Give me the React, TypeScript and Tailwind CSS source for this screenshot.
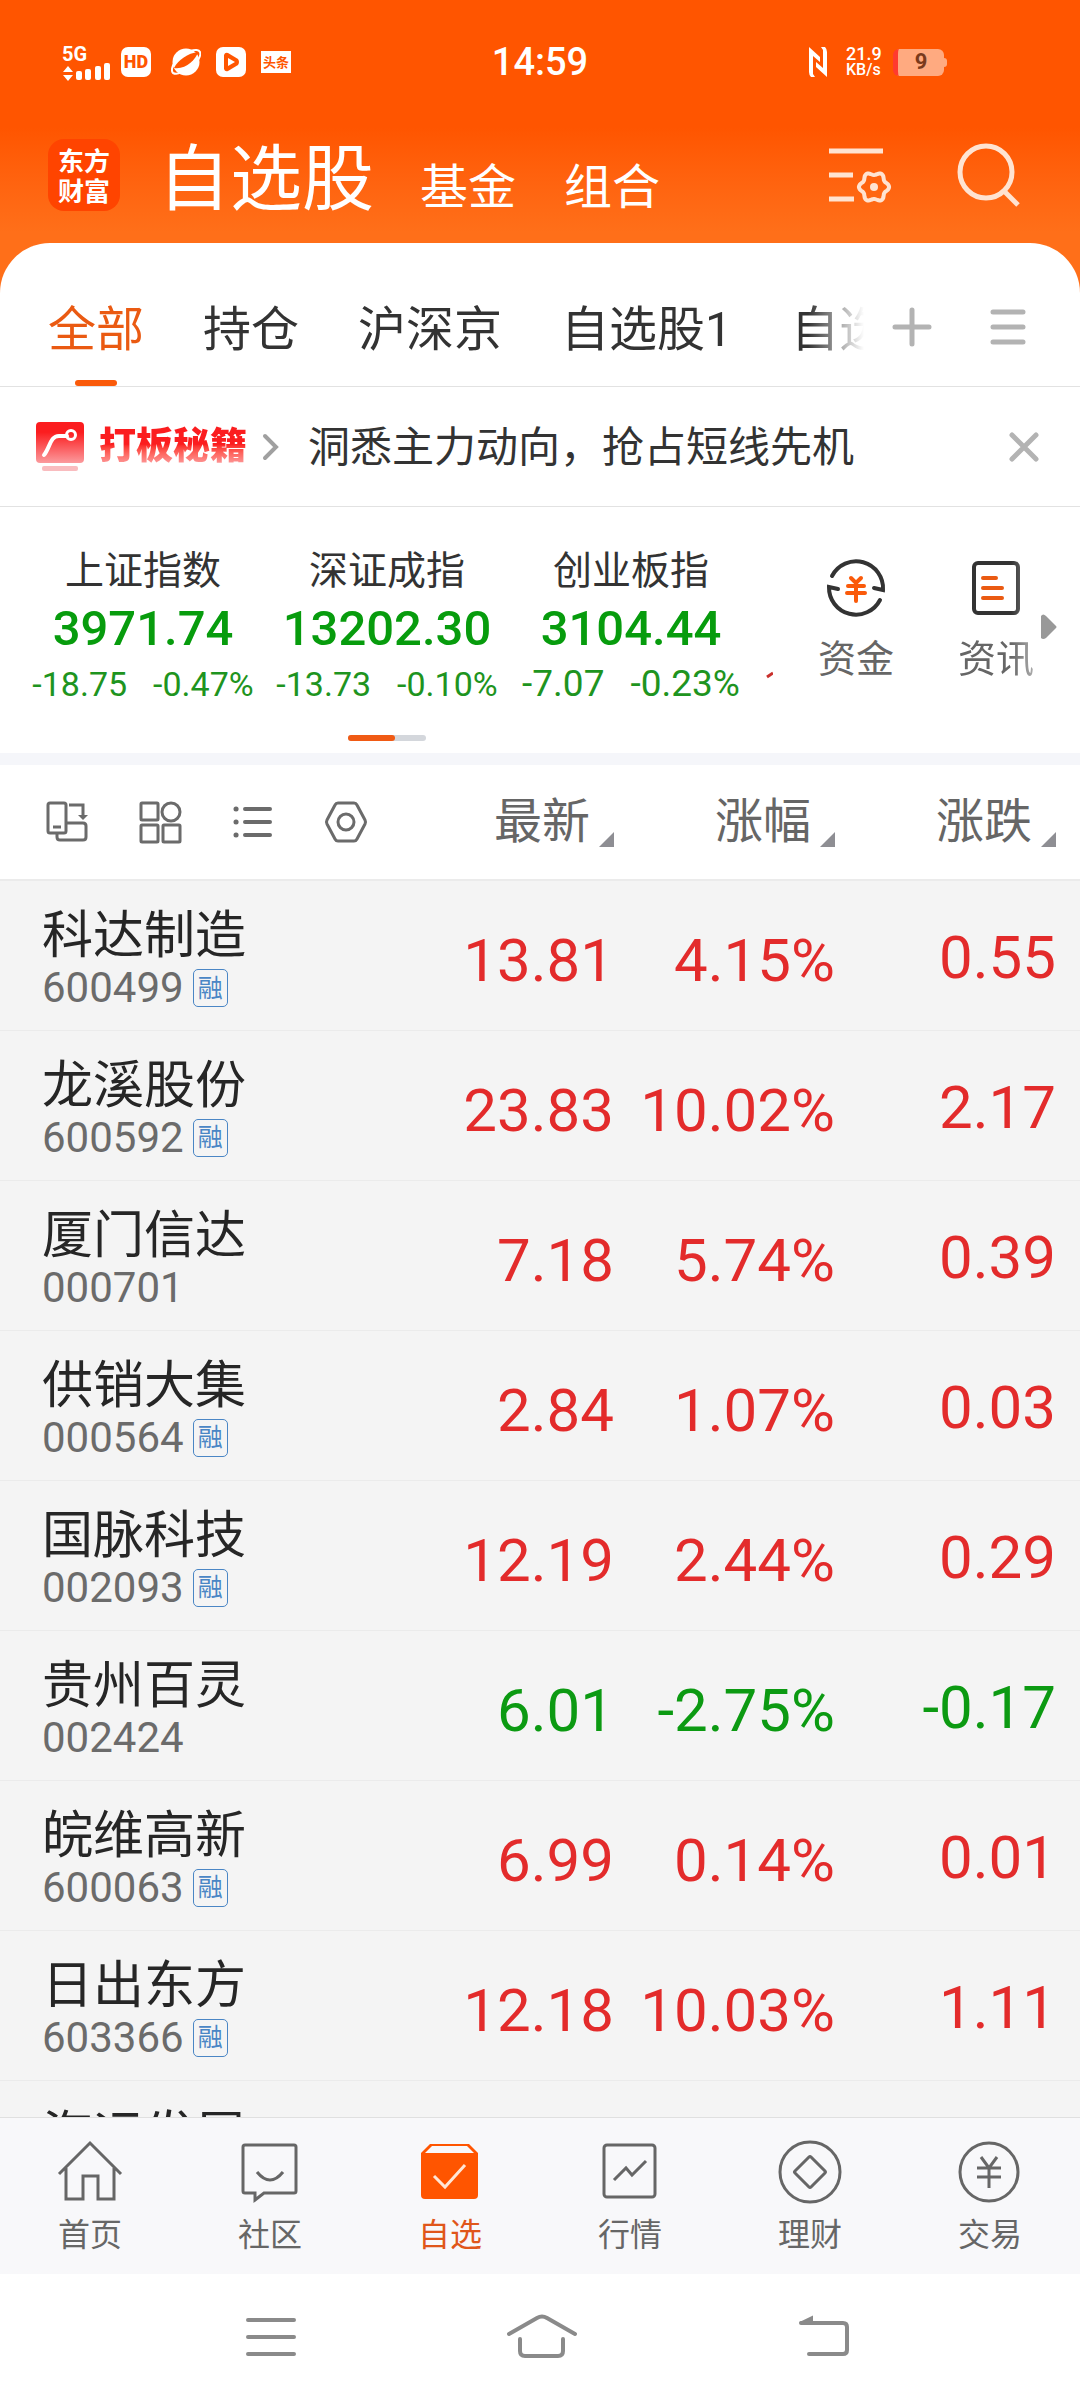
import type { ReactNode } from 'react';

type Stock = { name: string; code: string; margin: boolean; price: string; pct: string; diff: string; down?: boolean };

const stocks: Stock[] = [
  { name: '科达制造', code: '600499', margin: true, price: '13.81', pct: '4.15%', diff: '0.55' },
  { name: '龙溪股份', code: '600592', margin: true, price: '23.83', pct: '10.02%', diff: '2.17' },
  { name: '厦门信达', code: '000701', margin: false, price: '7.18', pct: '5.74%', diff: '0.39' },
  { name: '供销大集', code: '000564', margin: true, price: '2.84', pct: '1.07%', diff: '0.03' },
  { name: '国脉科技', code: '002093', margin: true, price: '12.19', pct: '2.44%', diff: '0.29' },
  { name: '贵州百灵', code: '002424', margin: false, price: '6.01', pct: '-2.75%', diff: '-0.17', down: true },
  { name: '皖维高新', code: '600063', margin: true, price: '6.99', pct: '0.14%', diff: '0.01' },
  { name: '日出东方', code: '603366', margin: true, price: '12.18', pct: '10.03%', diff: '1.11' },
  { name: '海运发展', code: '', margin: false, price: '', pct: '', diff: '' },
];

const indices = [
  { name: '上证指数', value: '3971.74', diff: '-18.75', pct: '-0.47%', size: 'text-[34px]' },
  { name: '深证成指', value: '13202.30', diff: '-13.73', pct: '-0.10%', size: 'text-[34px]' },
  { name: '创业板指', value: '3104.44', diff: '-7.07', pct: '-0.23%', size: 'text-[37px]' },
];

// Outline of a six-lobed gear centred on (45, 44).
const gearPath =
  Array.from({ length: 72 }, (_, i) => {
    const t = (i / 72) * Math.PI * 2;
    const r = 13.5 + 1.6 * Math.cos(6 * t);
    return `${i ? 'L' : 'M'}${(45 + r * Math.cos(t)).toFixed(1)} ${(44 + r * Math.sin(t)).toFixed(1)}`;
  }).join('') + 'Z';

function StatusBar() {
  return (
    <div className="grid grid-cols-[1fr_auto_1fr] items-center h-[124px] px-[62px] text-white">
      <div className="flex items-center">
        <div className="flex w-[50px] flex-col">
          <span className="pt-[2px] text-[20px] leading-[18px] font-bold">5G</span>
          <svg width="50" height="18" viewBox="0 16 50 18" fill="#fff" aria-hidden="true">
            <path d="M6 19l5 6H1zM6 34l5-6H1z" />
            <rect x="14" y="24" width="6" height="9" rx="2" />
            <rect x="23" y="22" width="6" height="11" rx="2" />
            <rect x="33" y="19" width="6" height="14" rx="2" />
            <rect x="42" y="16" width="6" height="17" rx="2" />
          </svg>
        </div>
        <span className="ml-[9px] grid place-items-center size-[30px] rounded-[7px] bg-white text-[#ff5500] text-[18px] leading-none font-black">HD</span>
        <svg className="ml-[20px]" width="30" height="28" viewBox="0 0 30 28" aria-hidden="true">
          <circle cx="15" cy="14" r="13.5" fill="#fff" />
          <path d="M3 20C7 12 17 5 27 4C25 12 14 22 3 20Z" fill="#ff5500" />
          <path d="M4 14C1 18 0 23 2 25C4 26 7 26 10 24M20 3C24 1 28 2 29 4C30 7 28 11 26 13" fill="none" stroke="#fff" strokeWidth="2" />
        </svg>
        <svg className="ml-[15px]" width="30" height="30" viewBox="0 0 30 30" aria-hidden="true">
          <rect width="30" height="30" rx="7" fill="#fff" />
          <path d="M8 8Q9 5 12 6L22 12Q24 15 22 18L12 24Q9 25 8 22Z" fill="#ff5500" />
          <path d="M12 11l7 4-7 4z" fill="#fff" />
        </svg>
        <span className="ml-[15px] grid place-items-center w-[30px] h-[22px] bg-white text-[#ff5500] text-[13px] leading-none font-bold">头条</span>
      </div>
      <time className="text-[38px] leading-none font-medium">14:59</time>
      <div className="flex items-center justify-end pr-[71px]">
        <svg width="18" height="30" viewBox="0 0 18 30" fill="#fff" aria-hidden="true">
          <path d="M0 0L11 10V15L4 9V27L6 30H2Q0 28 0 25ZM18 30L7 20V15L14 21V3L12 0H16Q18 2 18 5Z" />
        </svg>
        <div className="ml-[19px] w-[36px] text-[18px] leading-[16px] font-medium">
          <div>21.9</div>
          <div className="text-[16px]">KB/s</div>
        </div>
        <div className="ml-[11px] flex items-center">
          <div className="grid place-items-center w-[51px] h-[27px] rounded-[6px] border-l-[5px] border-[#ff3b2f] bg-[#ffaa80] text-[#7a3a1c] text-[22px] leading-none font-bold">9</div>
          <div className="w-[3px] h-[9px] rounded-r-[3px] bg-[#ffaa80]" />
        </div>
      </div>
    </div>
  );
}

function Header() {
  return (
    <header className="flex h-[119px] pl-[48px] pr-[59px] text-white">
      <div className="mt-[15px] size-[72px] rounded-[16px] bg-[#ff4400] grid place-content-center text-center font-['Noto_Sans_CJK_SC',sans-serif] font-bold text-[26px] leading-[30px]">
        东方
        <br />
        财富
      </div>
      <nav className="ml-[38px] mt-[4px] flex items-baseline h-[100px]">
        <a href="#stocks" className="text-[72px] leading-[104px]">自选股</a>
        <a href="#funds" className="ml-[46px] text-[48px]">基金</a>
        <a href="#portfolio" className="ml-[48px] text-[48px]">组合</a>
      </nav>
      <button aria-label="列表设置" className="ml-auto mt-[19px] h-[64px]">
        <svg width="63" height="64" viewBox="0 0 63 64" fill="none" stroke="#ffe3d1" strokeWidth="5">
          <path d="M0 8H54M0 32H24M0 56H25" />
          <path d={gearPath} strokeWidth="4" strokeLinejoin="round" />
          <circle cx="45" cy="44" r="4" fill="#ffe3d1" stroke="none" />
        </svg>
      </button>
      <button aria-label="搜索" className="ml-[65px] mt-[18px] h-[66px]">
        <svg width="64" height="66" viewBox="0 0 64 66" fill="none" stroke="#ffe3d1" strokeWidth="5">
          <circle cx="29" cy="30" r="26" />
          <path d="M47 49L61 63" />
        </svg>
      </button>
    </header>
  );
}

function Tabs() {
  return (
    <div className="flex h-[144px] border-b border-[#e2e2e2] bg-white rounded-t-[50px]">
      <nav className="ml-[48px] flex flex-1 gap-[59px] overflow-hidden whitespace-nowrap text-[48px] text-[#333] [mask-image:linear-gradient(to_right,#000_calc(100%-56px),transparent)]">
        <a href="#all" className="flex flex-col items-center text-[#ea5a12]">
          <span className="pt-[51px] leading-[72px]">全部</span>
          <span className="mt-auto h-[6px] w-[42px] rounded-full bg-[#fa5a0a]" />
        </a>
        <a href="#hold" className="pt-[51px] leading-[72px]">持仓</a>
        <a href="#cn" className="pt-[51px] leading-[72px]">沪深京</a>
        <a href="#g1" className="pt-[51px] leading-[72px]">自选股1</a>
        <a href="#g2" className="pt-[51px] leading-[72px]">自选股2</a>
      </nav>
      <div className="flex w-[216px] shrink-0 gap-[58px] pl-[28px] pt-[64px]">
        <button aria-label="添加分组" className="h-[40px]">
          <svg width="40" height="40" viewBox="0 0 40 40" stroke="#b3b3b3" strokeWidth="5" strokeLinecap="round"><path d="M3 20H37M20 3V37" /></svg>
        </button>
        <button aria-label="分组菜单" className="h-[40px]">
          <svg width="36" height="40" viewBox="0 0 36 40" stroke="#b3b3b3" strokeWidth="5" strokeLinecap="round"><path d="M3 5H33M3 20H33M3 35H33" /></svg>
        </button>
      </div>
    </div>
  );
}

function Promo() {
  return (
    <div className="flex items-center h-[120px] border-b border-[#e2e2e2] bg-white pl-[36px] pr-[39px]">
      <svg width="48" height="50" viewBox="0 0 48 50" fill="none" aria-hidden="true">
        <defs>
          <linearGradient id="promo" x1="0" y1="0" x2="0" y2="1"><stop offset=".25" stopColor="#fb1d1f" /><stop offset="1" stopColor="#fb9a9d" /></linearGradient>
        </defs>
        <rect width="48" height="41" rx="4" fill="url(#promo)" />
        <path d="M8 33C14 26 14 14 23 14H31" stroke="#fff" strokeWidth="4" strokeLinecap="round" />
        <circle cx="35" cy="13" r="4.500" stroke="#fff" strokeWidth="3" />
        <rect x="6" y="44" width="36" height="5" rx="2" fill="#f9bcbf" />
      </svg>
      <a href="#tips" className="ml-[15px] bg-linear-to-b from-[#fb1d1f] from-45% to-[#fba0a3] to-85% bg-clip-text text-transparent text-[37px] leading-[54px] font-black">打板秘籍</a>
      <svg className="ml-[15px]" width="18" height="30" viewBox="0 0 18 30" fill="none" stroke="#a0a0a0" strokeWidth="4" strokeLinecap="round" aria-hidden="true"><path d="M3 4L14 15L3 26" /></svg>
      <p className="ml-[28px] pt-[2px] text-[42px] leading-[60px] text-[#333] whitespace-nowrap">洞悉主力动向，抢占短线先机</p>
      <button aria-label="关闭" className="ml-auto">
        <svg width="34" height="34" viewBox="0 0 34 34" stroke="#b3b3b3" strokeWidth="5" strokeLinecap="round"><path d="M5 5L29 29M29 5L5 29" /></svg>
      </button>
    </div>
  );
}

function IndexPanel() {
  return (
    <section className="flex h-[246px] bg-white">
      <div className="w-[774px] shrink-0 pl-[21px] pt-[36px]">
        <div className="flex items-end">
          {indices.map((i) => (
            <div key={i.name} className="w-[244px] shrink-0 text-center">
              <div className="text-[39px] leading-[56px] text-[#333]">{i.name}</div>
              <div className="text-[49px] leading-[60px] font-medium text-[#079c0d]">{i.value}</div>
              <div className={`flex justify-center gap-[26px] leading-[50px] text-[#1e9420] ${i.size}`}>
                <span>{i.diff}</span>
                <span>{i.pct}</span>
              </div>
            </div>
          ))}
          <svg className="mb-[30px]" width="20" height="10" viewBox="0 0 20 10" stroke="#c9302c" strokeWidth="3" aria-hidden="true"><path d="M14 8L20 4" /></svg>
        </div>
        <div className="ml-[327px] mt-[26px] h-[6px] w-[78px] rounded-full bg-[#d4d7dc]">
          <div className="h-full w-[60%] rounded-full bg-[#f05a14]" />
        </div>
      </div>
      <div className="flex flex-1 items-start pl-[44px] pt-[50px] text-[38px] leading-[54px] text-[#666]">
        <a href="#money" className="flex flex-col items-center">
          <svg width="62" height="62" viewBox="0 0 62 62" fill="none" aria-hidden="true">
            <path d="M7 19A27 27 0 0 1 58 33L49 31M55 43A27 27 0 0 1 4 30L13 32" stroke="#333" strokeWidth="4" strokeLinecap="round" />
            <path d="M26 21L31 26L36 21M23 29H39M22 36H40M31 27V44" stroke="#fa5a0a" strokeWidth="4" strokeLinecap="round" />
          </svg>
          <span className="mt-[13px]">资金</span>
        </a>
        <a href="#news" className="ml-[64px] flex flex-col items-center [mask-image:linear-gradient(to_right,#000_70%,#0008)]">
          <svg width="62" height="62" viewBox="0 0 62 62" fill="none" aria-hidden="true">
            <rect x="9" y="6" width="44" height="50" rx="4" stroke="#333" strokeWidth="4" />
            <path d="M18 21H31M18 31H37M18 41H37" stroke="#ea5a12" strokeWidth="4" strokeLinecap="round" />
          </svg>
          <span className="mt-[13px]">资讯</span>
        </a>
        <svg className="ml-[7px] mt-[57px]" width="16" height="26" viewBox="0 0 16 26" fill="#999" aria-hidden="true"><path d="M0 2Q2-1 5 2L15 12Q16 13 15 14L5 24Q2 26 0 24Z" /></svg>
      </div>
    </section>
  );
}

function SortHead({ children }: { children: string }) {
  return (
    <th scope="col" className="p-0 font-normal">
      <button className="flex w-full items-end justify-end text-[48px] leading-[72px] text-[#666]">
        {children}
        <svg className="mb-[11px] ml-[9px]" width="15" height="15" viewBox="0 0 15 15" fill="#8e8e93" aria-hidden="true"><path d="M15 0V15H0Z" /></svg>
      </button>
    </th>
  );
}

function ToolButton({ label, children }: { label: string; children: ReactNode }) {
  return (
    <button aria-label={label} className="size-[44px]">
      <svg width="44" height="44" viewBox="0 0 44 44" fill="none" stroke="#6b6b6b" strokeWidth="3">{children}</svg>
    </button>
  );
}

function StockTable() {
  return (
    <div className="min-h-0 flex-1 overflow-hidden bg-[#f4f4f4]">
      <table className="w-full table-fixed border-collapse">
        <colgroup>
          <col />
          <col className="w-[221px]" />
          <col className="w-[221px]" />
          <col className="w-[221px]" />
          <col className="w-[24px]" />
        </colgroup>
        <thead>
          <tr className="h-[115px] border-b-2 border-[#ebebeb] bg-white">
            <th scope="col" className="p-0">
              <div className="flex gap-[49px] pl-[45px]">
                <ToolButton label="横屏">
                  <rect x="3" y="3" width="18" height="30" rx="2" />
                  <path d="M8 27H16M24 5H38V16M12 34V37Q12 40 15 40H38Q41 40 41 37V26Q41 23 38 23H22" />
                  <path d="M33 15H43L38 20Z" fill="#6b6b6b" stroke="none" />
                </ToolButton>
                <ToolButton label="宫格">
                  <rect x="3" y="3" width="17" height="17" rx="1" />
                  <circle cx="33" cy="12" r="9" />
                  <rect x="3" y="25" width="17" height="17" rx="1" />
                  <rect x="25" y="25" width="17" height="17" rx="1" />
                </ToolButton>
                <ToolButton label="列表">
                  <path d="M14 9H39M14 22H39M14 35H39" strokeWidth="4" strokeLinecap="round" />
                  <path d="M5 9H5.100M5 22H5.100M5 35H5.100" strokeWidth="5" strokeLinecap="round" />
                </ToolButton>
                <ToolButton label="设置">
                  <path d="M11 5Q12 3 14 3H30Q32 3 33 5L41 20Q42 22 41 24L33 39Q32 41 30 41H14Q12 41 11 39L3 24Q2 22 3 20Z" />
                  <circle cx="22" cy="22" r="8" />
                </ToolButton>
              </div>
            </th>
            <SortHead>最新</SortHead>
            <SortHead>涨幅</SortHead>
            <SortHead>涨跌</SortHead>
            <td />
          </tr>
        </thead>
        <tbody>
          {stocks.map((s) => (
            <tr key={s.name} className={`h-[150px] border-b border-[#ebebeb] text-[60px] leading-[72px] ${s.down ? 'text-[#0c9a12]' : 'text-[#e32b2b]'}`}>
              <td className="p-0 pl-[42px] align-top">
                <div className="pt-[20px] text-[51px] leading-[70px] text-[#262626]">{s.name}</div>
                <div className="flex h-[34px] items-center text-[42px] leading-[34px] text-[#6b6b6b]">
                  {s.code}
                  {s.margin && (
                    <span className="ml-[9px] grid h-[38px] w-[35px] place-items-center rounded-[5px] border border-[#4a86c5] text-[25px] leading-none text-[#4a86c5]">融</span>
                  )}
                </div>
              </td>
              <td className="p-0 pt-[12px] text-right">{s.price}</td>
              <td className="p-0 pt-[12px] text-right">{s.pct}</td>
              <td className="p-0 pt-[6px] text-right">{s.diff}</td>
              <td />
            </tr>
          ))}
        </tbody>
      </table>
    </div>
  );
}

function NavItem({ label, active, children }: { label: string; active?: boolean; children: ReactNode }) {
  return (
    <a href={`#${label}`} className={`flex flex-1 flex-col items-center pt-[20px] text-[32px] leading-[48px] ${active ? 'text-[#e0561a]' : 'text-[#666]'}`}>
      <svg width="68" height="68" viewBox="0 0 68 68" fill="none" stroke="#666" strokeWidth="3" aria-hidden="true">{children}</svg>
      <span className="mt-[5px]">{label}</span>
    </a>
  );
}

function BottomNav() {
  return (
    <nav className="flex h-[157px] shrink-0 border-t border-[#e0e0e0] bg-[#f8f8fa]">
      <NavItem label="首页">
        <path d="M3 36L34 5L65 36M10 30V61H27V38H42V61H58V30" />
      </NavItem>
      <NavItem label="社区">
        <path d="M9 7H58Q60 7 60 9V53Q60 55 58 55H28L19 62V55H9Q7 55 7 53V9Q7 7 9 7Z" />
        <path d="M21 34Q34 50 47 34" />
      </NavItem>
      <NavItem label="自选" active>
        <path d="M14 6H53L62 15V57Q62 61 58 61H9Q5 61 5 57V15Z" fill="#ff5500" stroke="none" />
        <path d="M16 8H51L58 15H9Z" fill="#f8f8fa" stroke="none" />
        <path d="M18 38L29 49L49 27" stroke="#ffe6d5" />
      </NavItem>
      <NavItem label="行情">
        <rect x="8" y="7" width="51" height="52" rx="3" />
        <path d="M18 42L30 30L36 37L50 23" />
      </NavItem>
      <NavItem label="理财">
        <circle cx="34" cy="34" r="30" />
        <path d="M33 19Q34 18 35 19L49 33Q50 34 49 35L35 49Q34 50 33 49L19 35Q18 34 19 33Z" />
      </NavItem>
      <NavItem label="交易">
        <circle cx="33" cy="34" r="29" />
        <path d="M25 19L33 30L41 19M21 30H45M21 39H45M33 30V50" />
      </NavItem>
    </nav>
  );
}

function SystemNav() {
  return (
    <div className="flex h-[126px] shrink-0 items-start justify-center bg-white pl-[16px] pt-[40px]">
      <button aria-label="最近任务" className="h-[46px]">
        <svg width="50" height="46" viewBox="0 0 50 46" stroke="#8a8a8a" strokeWidth="4" strokeLinecap="round"><path d="M2 6H48M2 23H48M2 40H48" /></svg>
      </button>
      <button aria-label="主屏幕" className="ml-[210px] h-[46px]">
        <svg width="72" height="46" viewBox="0 0 72 46" fill="none" stroke="#8a8a8a" strokeWidth="4" strokeLinecap="round"><path d="M3 20L31 4Q36 1 41 4L69 20M14 25V37Q14 42 19 42H52Q57 42 57 37V25" /></svg>
      </button>
      <button aria-label="返回" className="ml-[220px] h-[46px]">
        <svg width="52" height="46" viewBox="0 0 52 46" fill="none" stroke="#8a8a8a" strokeWidth="4" strokeLinecap="round"><path d="M3 9H45Q49 9 49 13V36Q49 40 45 40H11" /><path d="M2 9L14 3V9Z" fill="#8a8a8a" strokeWidth="2" /></svg>
      </button>
    </div>
  );
}

export default function App() {
  return (
    <div className="flex h-screen flex-col overflow-hidden bg-white font-['Roboto','Noto_Sans_CJK_SC',sans-serif]">
      <div className="shrink-0 bg-linear-to-b from-[#ff5500] from-33% to-[#ff6f19] to-60%">
        <StatusBar />
        <Header />
        <Tabs />
      </div>
      <div className="shrink-0">
        <Promo />
        <IndexPanel />
        <div className="h-[12px] bg-[#f5f6fa]" />
      </div>
      <StockTable />
      <BottomNav />
      <SystemNav />
    </div>
  );
}
